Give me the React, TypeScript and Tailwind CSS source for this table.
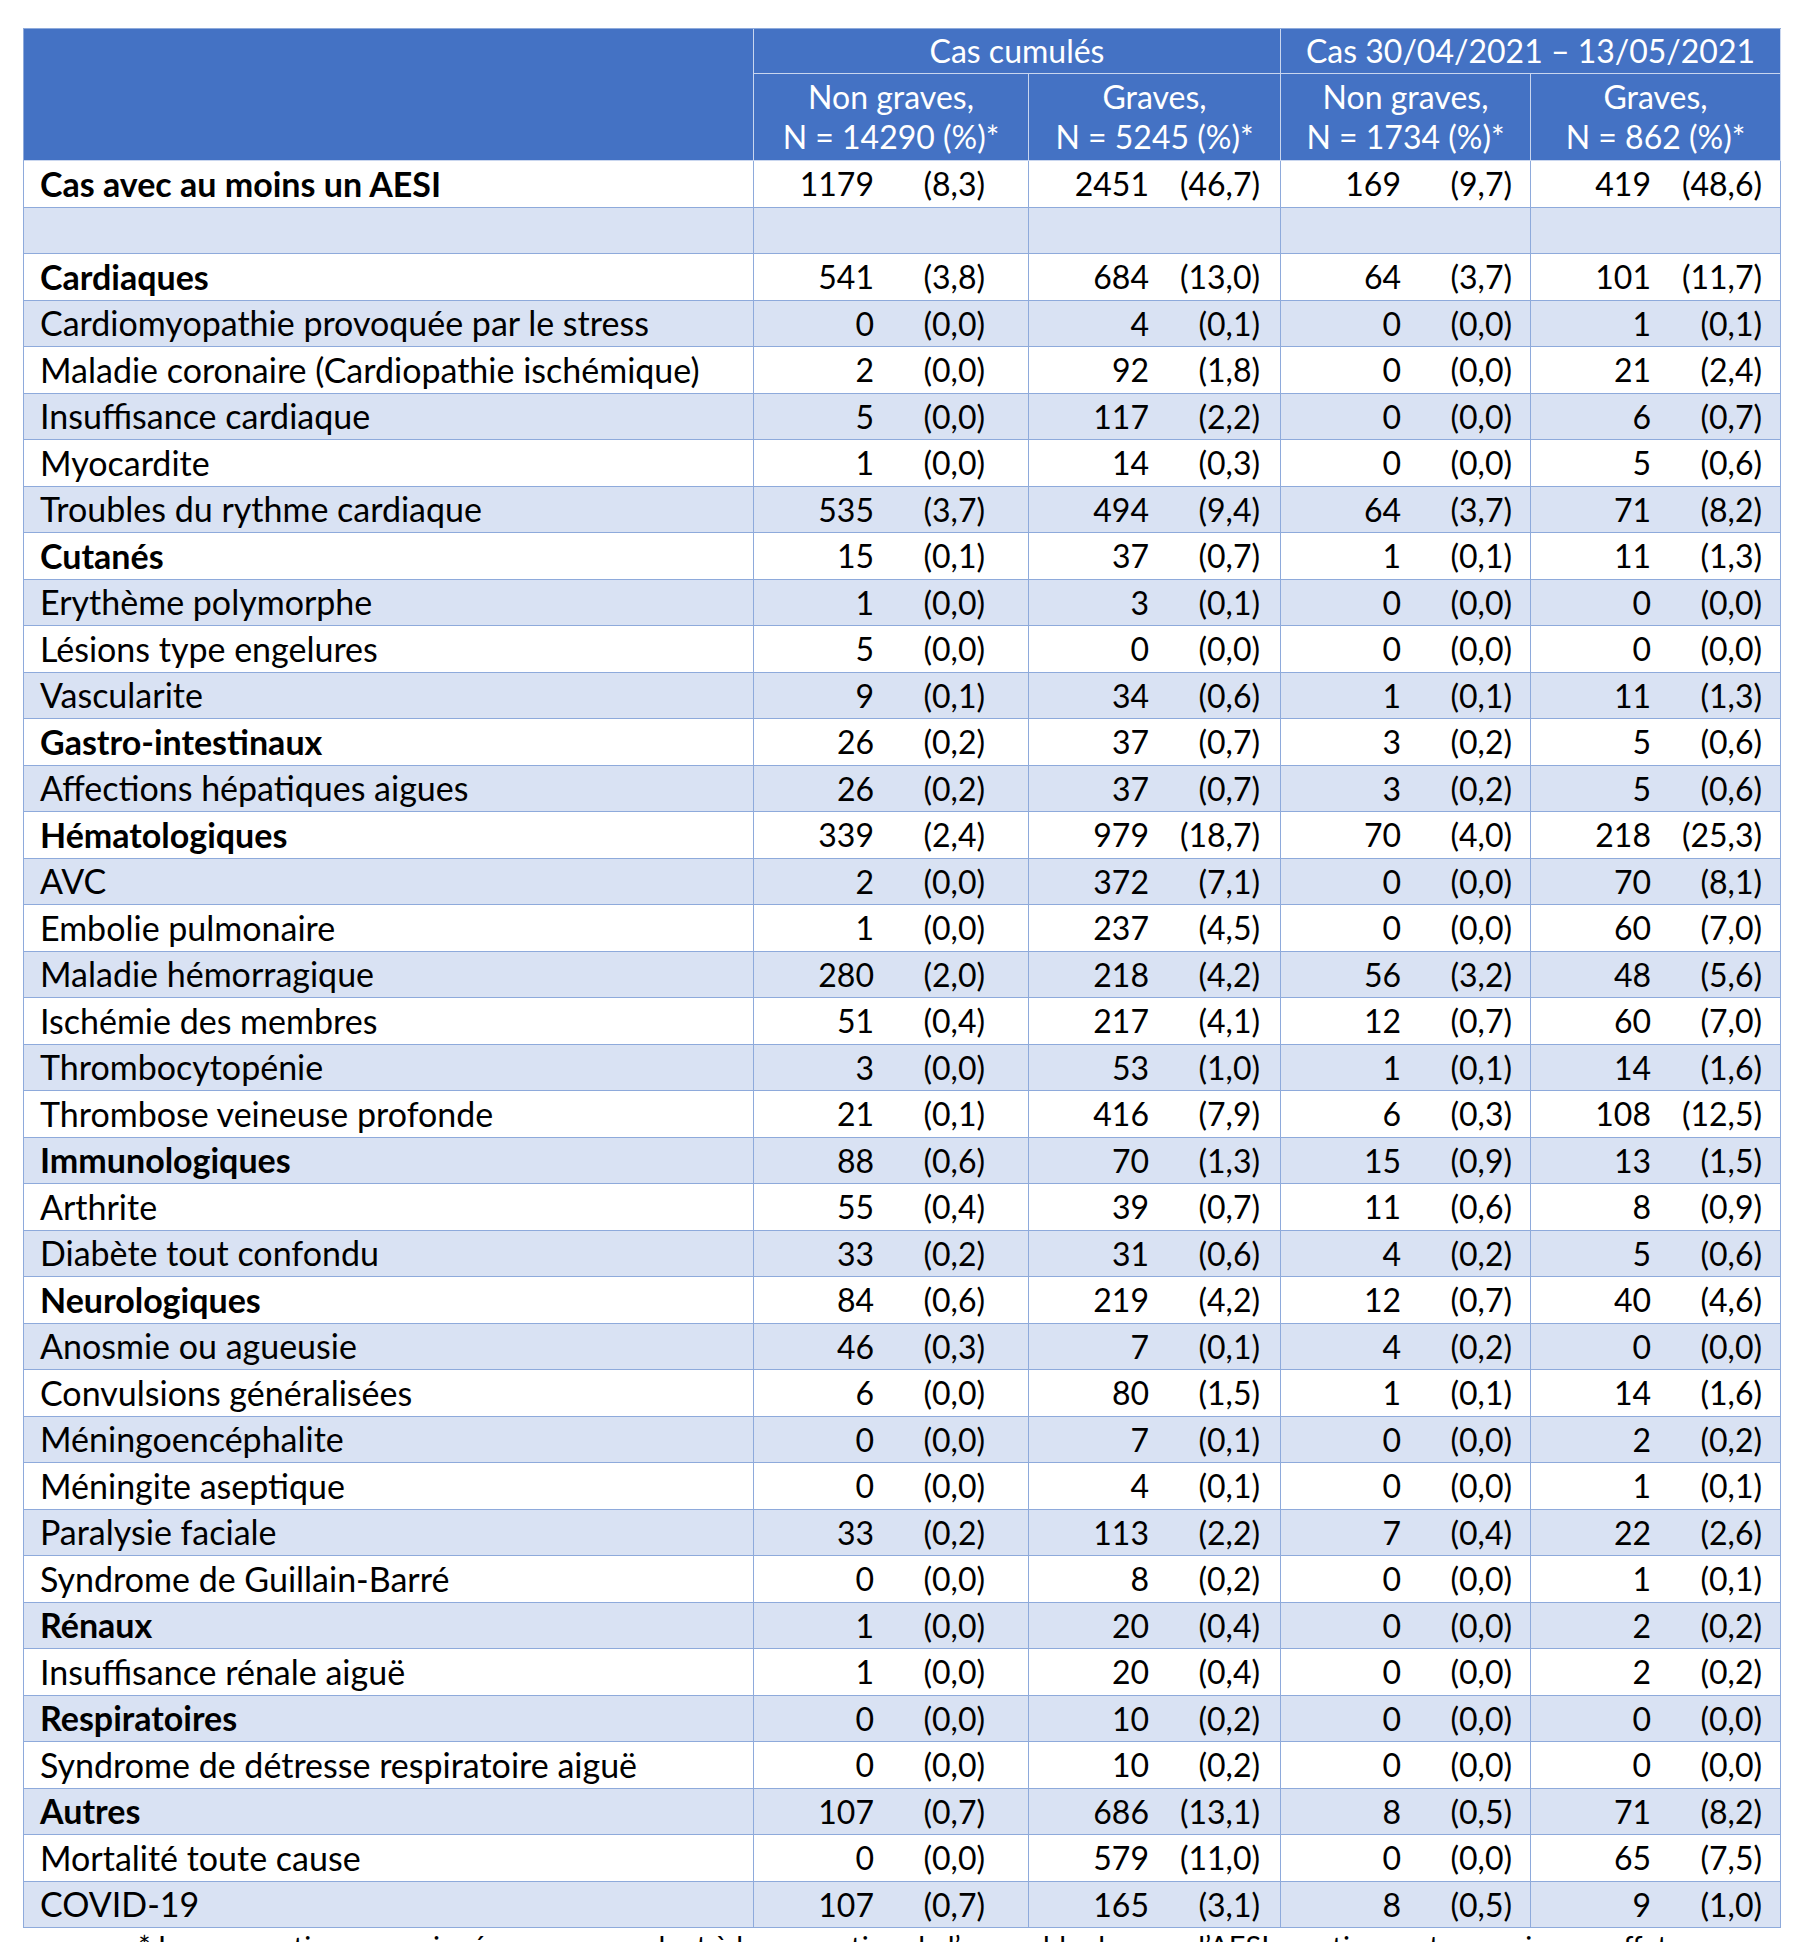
type Row = {
  label: string;
  bold?: boolean;
  cells?: [string, string][];
};

const rows: Row[] = [
  { label: "Cas avec au moins un AESI", bold: true, cells: [["1179", "(8,3)"], ["2451", "(46,7)"], ["169", "(9,7)"], ["419", "(48,6)"]] },
  { label: "" },
  { label: "Cardiaques", bold: true, cells: [["541", "(3,8)"], ["684", "(13,0)"], ["64", "(3,7)"], ["101", "(11,7)"]] },
  { label: "Cardiomyopathie provoquée par le stress", cells: [["0", "(0,0)"], ["4", "(0,1)"], ["0", "(0,0)"], ["1", "(0,1)"]] },
  { label: "Maladie coronaire (Cardiopathie ischémique)", cells: [["2", "(0,0)"], ["92", "(1,8)"], ["0", "(0,0)"], ["21", "(2,4)"]] },
  { label: "Insuffisance cardiaque", cells: [["5", "(0,0)"], ["117", "(2,2)"], ["0", "(0,0)"], ["6", "(0,7)"]] },
  { label: "Myocardite", cells: [["1", "(0,0)"], ["14", "(0,3)"], ["0", "(0,0)"], ["5", "(0,6)"]] },
  { label: "Troubles du rythme cardiaque", cells: [["535", "(3,7)"], ["494", "(9,4)"], ["64", "(3,7)"], ["71", "(8,2)"]] },
  { label: "Cutanés", bold: true, cells: [["15", "(0,1)"], ["37", "(0,7)"], ["1", "(0,1)"], ["11", "(1,3)"]] },
  { label: "Erythème polymorphe", cells: [["1", "(0,0)"], ["3", "(0,1)"], ["0", "(0,0)"], ["0", "(0,0)"]] },
  { label: "Lésions type engelures", cells: [["5", "(0,0)"], ["0", "(0,0)"], ["0", "(0,0)"], ["0", "(0,0)"]] },
  { label: "Vascularite", cells: [["9", "(0,1)"], ["34", "(0,6)"], ["1", "(0,1)"], ["11", "(1,3)"]] },
  { label: "Gastro-intestinaux", bold: true, cells: [["26", "(0,2)"], ["37", "(0,7)"], ["3", "(0,2)"], ["5", "(0,6)"]] },
  { label: "Affections hépatiques aigues", cells: [["26", "(0,2)"], ["37", "(0,7)"], ["3", "(0,2)"], ["5", "(0,6)"]] },
  { label: "Hématologiques", bold: true, cells: [["339", "(2,4)"], ["979", "(18,7)"], ["70", "(4,0)"], ["218", "(25,3)"]] },
  { label: "AVC", cells: [["2", "(0,0)"], ["372", "(7,1)"], ["0", "(0,0)"], ["70", "(8,1)"]] },
  { label: "Embolie pulmonaire", cells: [["1", "(0,0)"], ["237", "(4,5)"], ["0", "(0,0)"], ["60", "(7,0)"]] },
  { label: "Maladie hémorragique", cells: [["280", "(2,0)"], ["218", "(4,2)"], ["56", "(3,2)"], ["48", "(5,6)"]] },
  { label: "Ischémie des membres", cells: [["51", "(0,4)"], ["217", "(4,1)"], ["12", "(0,7)"], ["60", "(7,0)"]] },
  { label: "Thrombocytopénie", cells: [["3", "(0,0)"], ["53", "(1,0)"], ["1", "(0,1)"], ["14", "(1,6)"]] },
  { label: "Thrombose veineuse profonde", cells: [["21", "(0,1)"], ["416", "(7,9)"], ["6", "(0,3)"], ["108", "(12,5)"]] },
  { label: "Immunologiques", bold: true, cells: [["88", "(0,6)"], ["70", "(1,3)"], ["15", "(0,9)"], ["13", "(1,5)"]] },
  { label: "Arthrite", cells: [["55", "(0,4)"], ["39", "(0,7)"], ["11", "(0,6)"], ["8", "(0,9)"]] },
  { label: "Diabète tout confondu", cells: [["33", "(0,2)"], ["31", "(0,6)"], ["4", "(0,2)"], ["5", "(0,6)"]] },
  { label: "Neurologiques", bold: true, cells: [["84", "(0,6)"], ["219", "(4,2)"], ["12", "(0,7)"], ["40", "(4,6)"]] },
  { label: "Anosmie ou agueusie", cells: [["46", "(0,3)"], ["7", "(0,1)"], ["4", "(0,2)"], ["0", "(0,0)"]] },
  { label: "Convulsions généralisées", cells: [["6", "(0,0)"], ["80", "(1,5)"], ["1", "(0,1)"], ["14", "(1,6)"]] },
  { label: "Méningoencéphalite", cells: [["0", "(0,0)"], ["7", "(0,1)"], ["0", "(0,0)"], ["2", "(0,2)"]] },
  { label: "Méningite aseptique", cells: [["0", "(0,0)"], ["4", "(0,1)"], ["0", "(0,0)"], ["1", "(0,1)"]] },
  { label: "Paralysie faciale", cells: [["33", "(0,2)"], ["113", "(2,2)"], ["7", "(0,4)"], ["22", "(2,6)"]] },
  { label: "Syndrome de Guillain-Barré", cells: [["0", "(0,0)"], ["8", "(0,2)"], ["0", "(0,0)"], ["1", "(0,1)"]] },
  { label: "Rénaux", bold: true, cells: [["1", "(0,0)"], ["20", "(0,4)"], ["0", "(0,0)"], ["2", "(0,2)"]] },
  { label: "Insuffisance rénale aiguë", cells: [["1", "(0,0)"], ["20", "(0,4)"], ["0", "(0,0)"], ["2", "(0,2)"]] },
  { label: "Respiratoires", bold: true, cells: [["0", "(0,0)"], ["10", "(0,2)"], ["0", "(0,0)"], ["0", "(0,0)"]] },
  { label: "Syndrome de détresse respiratoire aiguë", cells: [["0", "(0,0)"], ["10", "(0,2)"], ["0", "(0,0)"], ["0", "(0,0)"]] },
  { label: "Autres", bold: true, cells: [["107", "(0,7)"], ["686", "(13,1)"], ["8", "(0,5)"], ["71", "(8,2)"]] },
  { label: "Mortalité toute cause", cells: [["0", "(0,0)"], ["579", "(11,0)"], ["0", "(0,0)"], ["65", "(7,5)"]] },
  { label: "COVID-19", cells: [["107", "(0,7)"], ["165", "(3,1)"], ["8", "(0,5)"], ["9", "(1,0)"]] },
];

const subHeaders: [string, string][] = [
  ["Non graves,", "N = 14290 (%)*"],
  ["Graves,", "N = 5245 (%)*"],
  ["Non graves,", "N = 1734 (%)*"],
  ["Graves,", "N = 862 (%)*"],
];

const cols = "grid grid-cols-[730px_275px_252px_250px_250px]";

function DataRow({ row, index }: { row: Row; index: number }) {
  const bg = index % 2 === 1 ? "bg-[#d9e2f3]" : "bg-white";
  const cells = row.cells ?? [["", ""], ["", ""], ["", ""], ["", ""]];
  return (
    <div className={`${cols} h-[46.5px] ${bg}`}>
      <div className={`flex items-center pl-[16px] pt-[1px] text-[34px] border-r border-b border-[#8eaadb] ${row.bold ? "font-bold" : ""}`}>
        {row.label}
      </div>
      {cells.map(([n, p], i) => (
        <div key={i} className="flex items-center pt-[1px] border-r border-b border-[#8eaadb]">
          <span className="w-[120px] text-right">{n}</span>
          <span className="w-[111px] text-right">{p}</span>
        </div>
      ))}
    </div>
  );
}

export default function App() {
  return (
    <div className="bg-white min-h-screen pt-[28px] pl-[23px] text-black font-['Lato',sans-serif] text-[32px] leading-[1.2]">
      <div className="w-[1758px] border-l border-t border-[#8eaadb]">
        <div className={`${cols} grid-rows-[45px_87px] bg-[#4472c4] text-white`}>
          <div className="row-span-2 border-r border-b border-[#c9d6ef]" />
          <div className="col-span-2 flex items-center justify-center pt-[1px] border-r border-b border-[#c9d6ef]">
            Cas cumulés
          </div>
          <div className="col-span-2 flex items-center justify-center pt-[1px] border-r border-b border-[#c9d6ef]">
            Cas 30/04/2021 – 13/05/2021
          </div>
          {subHeaders.map(([a, b], i) => (
            <div key={i} className="flex flex-col items-center justify-center leading-[40px] border-r border-b border-[#c9d6ef]">
              <span>{a}</span>
              <span>{b}</span>
            </div>
          ))}
        </div>
        {rows.map((row, i) => (
          <DataRow key={i} row={row} index={i} />
        ))}
      </div>
      <p className="pr-[23px] pt-[1px] text-center text-[29px] leading-[34px]">
        * Les proportions renseignées correspondent à la proportion de l’ensemble des cas d’AESI mentionnant au moins un effet
      </p>
    </div>
  );
}
